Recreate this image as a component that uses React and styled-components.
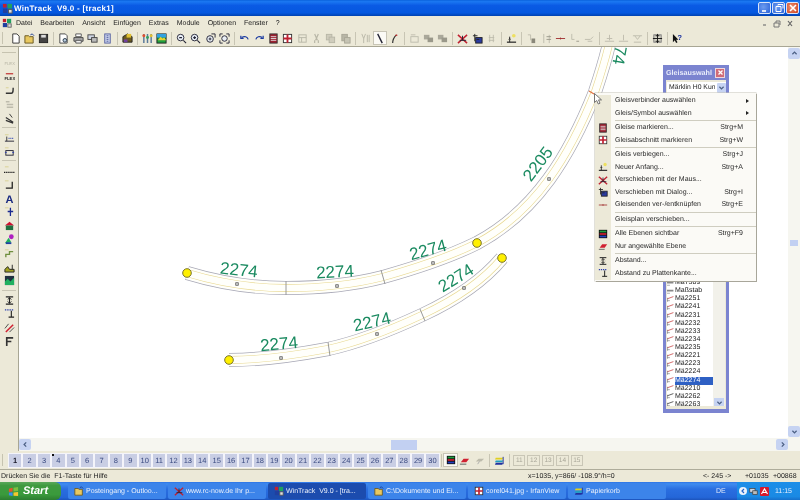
import React from "react";
import styled, { createGlobalStyle } from "styled-components";

const FONT = `"Liberation Sans", Arial, sans-serif`;
const BEIGE = "#ece9d8";

const Global = createGlobalStyle`
  html, body { margin: 0; padding: 0; background: ${BEIGE}; }
  body { font-family: ${FONT}; overflow: hidden; text-rendering: geometricPrecision; }
`;

const g = {
  new: <path d="M3 1h4.5L10 3.5V11H3z" fill="#fff" stroke="#333" />,
  open: <><path d="M1 3h4l1 1h4v7H1z" fill="#e8c860" stroke="#665520" /><path d="M7 2l2-1 2 2" fill="none" stroke="#1a3a90" /></>,
  save: <><rect x="1.5" y="1.5" width="9" height="9" fill="#444" stroke="#222" /><rect x="3.5" y="2" width="5" height="3" fill="#ddd" /></>,
  preview: <><path d="M2 1h6l2 2v8H2z" fill="#fff" stroke="#444" /><circle cx="7.5" cy="8" r="2" fill="#bcd" stroke="#234" /></>,
  print: <><path d="M3 1h6v3H3z" fill="#fff" stroke="#555" /><path d="M1 5h10v4H1z" fill="#aaa" stroke="#444" /><path d="M3 8h6v3H3z" fill="#eee" stroke="#555" /></>,
  screens: <><rect x="1" y="2" width="7" height="5" fill="#cfd6e4" stroke="#444" /><rect x="5" y="5" width="6" height="5" fill="#bbb" stroke="#444" /></>,
  book: <><rect x="3" y="1" width="6" height="10" fill="#c8d0ea" stroke="#5560a0" /><path d="M5 3h2M5 5h2M5 7h2M5 9h2" stroke="#5560a0" /></>,
  bag: <><path d="M1 4l5-3 5 3v6H1z" fill="#6a5a20" stroke="#222" /><rect x="5" y="1" width="5" height="4" fill="#e0c030" /><rect x="2" y="7" width="4" height="3" fill="#7040a0" /></>,
  tools: <><path d="M2 1v10M6 1v10M10 1v10" stroke="#5a7a9a" strokeWidth="1.6" /><circle cx="2" cy="3" r="1.6" fill="#e05030" /><circle cx="6" cy="5" r="1.6" fill="#30a060" /><circle cx="10" cy="3" r="1.6" fill="#e0c030" /></>,
  land: <><rect x="1" y="1" width="10" height="10" fill="#20a040" stroke="#222" /><rect x="1" y="1" width="10" height="4" fill="#30a0e0" /><path d="M2 8l3-4 2 2 2-1 2 3z" fill="#e8d030" /></>,
  zoomOut: <><circle cx="5" cy="5" r="3.6" fill="#e8eef6" stroke="#223" /><path d="M3.5 5h3M8 8l3 3" stroke="#223" strokeWidth="1.2" /></>,
  zoomIn: <><circle cx="5" cy="5" r="3.6" fill="#e8eef6" stroke="#223" /><path d="M3.5 5h3M5 3.5v3M8 8l3 3" stroke="#223" strokeWidth="1.2" /></>,
  zoomFit: <><circle cx="5.5" cy="6.5" r="3.6" fill="#e8eef6" stroke="#223" /><path d="M4 6.5h3M5.5 5v3" stroke="#223" /><path d="M7 1h4v4" fill="none" stroke="#223" /></>,
  zoomAll: <><circle cx="6" cy="6" r="3" fill="#e8eef6" stroke="#223" /><path d="M1 4V1h3M8 1h3v3M11 8v3H8M4 11H1V8" fill="none" stroke="#223" /></>,
  undo: <path d="M3 5c3-2 6-1 7 2M2 3v3h3" fill="none" stroke="#1a3aa0" strokeWidth="1.3" />,
  redo: <path d="M9 5C6 3 3 4 2 7M10 3v3H7" fill="none" stroke="#1a3aa0" strokeWidth="1.3" />,
  redDoc: <><rect x="2" y="1" width="8" height="10" fill="#a02030" stroke="#333" /><path d="M3 4h6M3 6h6M3 8h6" stroke="#ddd" /></>,
  redGrid: <><rect x="1.5" y="1.5" width="9" height="9" fill="#fff" stroke="#333" /><path d="M1.5 6h9M6 1.5v9" stroke="#c02030" strokeWidth="2" /></>,
  grayDoc: <><rect x="2" y="2" width="8" height="8" fill="none" stroke="#b8b6a6" /><path d="M2 5h8M5 5v5" stroke="#b8b6a6" /></>,
  cut: <path d="M4 1l3 7M8 1L5 8M4 8v3M8 8v3" fill="none" stroke="#b8b6a6" strokeWidth="1.3" />,
  copy: <><rect x="1.5" y="1.5" width="6" height="6" fill="#cfccbc" stroke="#b8b6a6" /><rect x="4.5" y="4.5" width="6" height="6" fill="#cfccbc" stroke="#b8b6a6" /></>,
  paste: <><rect x="2" y="1.5" width="6" height="7" fill="#b8b6a6" stroke="#a8a696" /><rect x="5" y="5" width="6" height="6" fill="#c6c4b4" stroke="#a8a696" /></>,
  forkGray: <path d="M2 1l2 5v5M6 1L4 6M8 2v8M10 2v8" fill="none" stroke="#b8b6a6" />,
  diag: <path d="M4 1l5 10" stroke="#223" strokeWidth="1.5" />,
  slash: <><path d="M4 11c0-4 2-7 4-9" fill="none" stroke="#333" strokeWidth="1.3" /><path d="M7 3l2-1" stroke="#c03030" strokeWidth="1.5" /></>,
  stackGray: <><rect x="1" y="2" width="6" height="5" fill="#aaa89a" /><rect x="5" y="5" width="6" height="5" fill="#9a988a" /></>,
  boxLight: <><rect x="2" y="4" width="8" height="6" fill="none" stroke="#bdbbac" /><path d="M2 2h5" stroke="#bdbbac" /></>,
  moveX: <><path d="M1 11L11 2M1 2l10 9" stroke="#c02030" strokeWidth="1.6" /><path d="M3 8h7M6 3v5" stroke="#223" /></>,
  moveBox: <><rect x="4" y="5" width="7" height="6" fill="#2a3aa0" stroke="#222" /><path d="M3 1v8M1 3h5M5 7h3" stroke="#222" /></>,
  grayTracks: <><path d="M3 5h6M3 8h6M4 2v8M8 2v8" stroke="#bdbbac" /></>,
  start: <><path d="M1 10h10" stroke="#222" strokeWidth="1.3" /><path d="M4 4v6" stroke="#222" /><path d="M3 7l1-1 1 1" stroke="#222" fill="none" /><circle cx="8.5" cy="3" r="2" fill="#eee060" /></>,
  trackA: <><path d="M2 2h3v6" fill="none" stroke="#bdbbac" /><rect x="6" y="6" width="4" height="5" fill="#8a887a" /></>,
  trackB: <><path d="M3 1v10M9 2v9" stroke="#bdbbac" /><path d="M6 4h5M6 7h5" stroke="#9a988a" /></>,
  line: <path d="M1 6h10M6 5v2" stroke="#a03030" />,
  trackC: <><path d="M3 1v6h3" fill="none" stroke="#bdbbac" /><path d="M8 9h3" stroke="#9a988a" /></>,
  trackD: <path d="M1 7h6l3-3M4 9h5" fill="none" stroke="#bdbbac" />,
  level1: <path d="M6 2v6M1 9h10M3 6h6" fill="none" stroke="#bdbbac" />,
  level2: <path d="M6 2v6M1 9h10" fill="none" stroke="#bdbbac" />,
  level3: <path d="M1 3h10M3 3l3 4 3-4M2 10h8" fill="none" stroke="#bdbbac" />,
  fit: <><rect x="2" y="2" width="8" height="8" fill="#d8d6c8" stroke="#777" /><path d="M6 1v10M1 6h10M4 3h4M4 9h4" stroke="#111" /></>,
  help: <><path d="M1 1v9l2-2 1.5 3 1.500-1-1.500-2.600H7z" fill="#111" /><text x="6" y="8" fontSize="8" fontWeight="700" fill="#1a30a0" fontFamily={FONT}>?</text></>,
  flexGray: <text x="0.500" y="9" fontSize="4.600" fill="#b8b6a6" fontFamily={FONT}>FLEX</text>,
  flex: <><path d="M2 3h8" stroke="#c03030" strokeWidth="1.3" /><text x="0.500" y="10" fontSize="4.600" fontWeight="700" fill="#222" fontFamily={FONT}>FLEX</text></>,
  hook: <><path d="M2 9h6c2 0 2-2 2-6" fill="none" stroke="#333" strokeWidth="1.5" /><path d="M2 3h3" stroke="#d8d090" /></>,
  grayLines: <path d="M2 3h4M3 6h7M3 9h7" stroke="#bdbbac" strokeWidth="1.5" />,
  diagTracks: <><path d="M2 5l8 5M2 8l8 3" stroke="#333" strokeWidth="1.3" /><path d="M6 1l3 4" stroke="#333" /></>,
  blueDash: <><path d="M1 3h4" stroke="#d8d090" /><path d="M3 5v5" stroke="#333" /><path d="M1 10h10" stroke="#223" /><path d="M5 7h6" stroke="#2a40b0" strokeDasharray="1 1" strokeWidth="1.4" /></>,
  cam: <><path d="M1 2h4" stroke="#d8d090" /><rect x="2" y="5" width="8" height="5" fill="none" stroke="#223" /><path d="M1 7h2M9 7h2" stroke="#2a40b0" /></>,
  measure: <><path d="M1 2h4" stroke="#d8d090" /><path d="M0 8h12" stroke="#222" strokeDasharray="1.5 .8" strokeWidth="1.4" /></>,
  corner: <><path d="M1 2h4" stroke="#d8d090" /><path d="M9 3v7H2" fill="none" stroke="#222" strokeWidth="1.4" /></>,
  letter: <text x="1.500" y="10.500" fontSize="12" fontWeight="700" fill="#1a2a80" fontFamily={FONT}>A</text>,
  pin: <><path d="M1 2h4" stroke="#d8d090" /><path d="M7 2v9M4 6h6" stroke="#1a2a90" strokeWidth="1.4" /></>,
  house: <><path d="M1 6l5-4 5 4z" fill="#d01030" /><rect x="2" y="6" width="8" height="5" fill="#207040" /></>,
  tree: <><circle cx="8" cy="3" r="2.6" fill="#b020c0" /><path d="M1 10l4-6 3 5z" fill="#20b060" /><rect x="2" y="9" width="6" height="2" fill="#2040a0" /></>,
  snake: <><path d="M1 2h4" stroke="#d8d090" /><path d="M2 10V7h4V4h4" fill="none" stroke="#709040" strokeWidth="1.5" /></>,
  scene: <path d="M1 11V8l3-3 2 3h5v3zM9 3v5" fill="#a0a020" stroke="#222" />,
  chart: <><rect x="1" y="1" width="10" height="10" fill="#203040" /><path d="M1 11V7l3-3 3 3 4-4v8z" fill="#20b060" /></>,
  spacing: <><path d="M2 2h8M2 10h8M6 3v6" stroke="#222" strokeWidth="1.2" /><path d="M4 5l2-2 2 2M4 7l2 2 2-2" fill="none" stroke="#222" /></>,
  edge: <><path d="M1 2h10" stroke="#2a40b0" strokeWidth="1.4" strokeDasharray="1.5 1" /><path d="M8 3v7M5 10h6" stroke="#222" strokeWidth="1.2" /></>,
  redLines: <><path d="M2 11L10 3" stroke="#d02030" strokeWidth="1.6" /><path d="M1 7l4-5M6 11l5-5" stroke="#444" /></>,
  fLetter: <path d="M3 11V2h7M3 6h5" fill="none" stroke="#333" strokeWidth="1.8" />,
  layers: <><rect x="1" y="1" width="10" height="10" fill="#111" /><rect x="2" y="2" width="8" height="2" fill="#20a040" /><rect x="2" y="5" width="8" height="2" fill="#d02030" /><rect x="2" y="8" width="8" height="2" fill="#2040c0" /></>,
  redPlane: <><path d="M2 8l3-4h6L8 8z" fill="#d02030" /><path d="M1 10h7" stroke="#555" /></>,
  grayPlane: <><path d="M2 7l3-3h6L8 7z" fill="#bdbbac" /><path d="M4 10l2-3" stroke="#aaa" /></>,
  layersFlat: <><path d="M2 3h8l-1 2H1z" fill="#e0d020" /><path d="M2 6h8l-1 2H1z" fill="#20a0c0" /><path d="M2 8.500h8l-1 2H1z" fill="#2030a0" /><path d="M10 2v8" stroke="#2030a0" /></>,
  app: <><rect x="1" y="1" width="4" height="4" fill="#c02030" /><rect x="6" y="1" width="5" height="5" fill="#20a060" /><rect x="1" y="6" width="5" height="5" fill="#2040a0" /><rect x="7" y="7" width="4" height="4" fill="#ddd" stroke="#555" /></>,
  trackSmall: <><path d="M0 5l11-4" stroke="#c03030" strokeWidth="1.2" /><path d="M0 8h5M1 3v7" stroke="#777" /></>,
  trackDark: <><path d="M0 5l11-4" stroke="#222" strokeWidth="1.2" /><path d="M0 8h5M1 3v7" stroke="#777" /></>,
  ruler: <><rect x="0" y="3" width="11" height="3" fill="#888" /><path d="M0 9h5" stroke="#777" /></>,
};

const Glyph = ({ name, size = 11 }) => (
  <svg width={size} height={size} viewBox="0 0 12 12">{g[name]}</svg>
);

const topTools = [
  "new", "open", "save", 0, "preview", "print", "screens", "book", 0, "bag", 0, "tools", "land", 0,
  "zoomOut", "zoomIn", "zoomFit", "zoomAll", 0, "undo", "redo", "redDoc", "redGrid", "grayDoc", "cut", "copy", "paste", 0,
  "forkGray", "diag", "slash", 0, "boxLight", "stackGray", "stackGray", 0, "moveX", "moveBox", "grayTracks", 0, "start", 0,
  "trackA", "trackB", "line", "trackC", "trackD", 0, "level1", "level2", "level3", 0, "fit", 0, "help",
];

const sideTools = [
  "flexGray", "flex", "hook", "grayLines", "diagTracks", 0, "blueDash", "cam", 0,
  "measure", "corner", "letter", "pin", "house", "tree", "snake", "scene", "chart", 0,
  "spacing", "edge", "redLines", "fLetter",
];

const menus = ["Datei", "Bearbeiten", "Ansicht", "Einfügen", "Extras", "Module", "Optionen", "Fenster", "?"];

const contextMenu = [
  { label: "Gleisverbinder auswählen", arrow: true },
  { label: "Gleis/Symbol auswählen", arrow: true },
  0,
  { label: "Gleise markieren...", key: "Strg+M", icon: "redDoc" },
  { label: "Gleisabschnitt markieren", key: "Strg+W", icon: "redGrid" },
  0,
  { label: "Gleis verbiegen...", key: "Strg+J" },
  { label: "Neuer Anfang...", key: "Strg+A", icon: "start" },
  { label: "Verschieben mit der Maus...", icon: "moveX" },
  { label: "Verschieben mit Dialog...", key: "Strg+I", icon: "moveBox" },
  { label: "Gleisenden ver-/entknüpfen", key: "Strg+E", icon: "line" },
  0,
  { label: "Gleisplan verschieben..." },
  0,
  { label: "Alle Ebenen sichtbar", key: "Strg+F9", icon: "layers" },
  { label: "Nur angewählte Ebene", icon: "redPlane" },
  0,
  { label: "Abstand...", icon: "spacing" },
  { label: "Abstand zu Plattenkante...", icon: "edge" },
];

const trackItems = [
  ["Ma7389", "ruler"], ["Maßstab", "ruler"], ["Mä2251"], ["Mä2241"], ["Mä2231"], ["Mä2232"], ["Mä2233"], ["Mä2234"],
  ["Mä2235"], ["Mä2221"], ["Mä2223"], ["Mä2224"], ["Mä2274", null, true], ["Mä2210"], ["Mä2262", "trackDark"], ["Mä2263", "trackDark"],
];

const tasks = [
  { label: "Posteingang - Outloo...", icon: "open" },
  { label: "www.rc-now.de Ihr p...", icon: "moveX" },
  { label: "WinTrack  V9.0 - [tra...", icon: "app", active: true },
  { label: "C:\\Dokumente und Ei...", icon: "open" },
  { label: "corel041.jpg - IrfanView", icon: "redGrid" },
  { label: "Papierkorb", icon: "layersFlat" },
];

const TRACK_A = "M187 273 C220 283 255 288 286 288 C320 288 352 285 383 277 C415 268 447 258 477 243 C505 228 530 205 549 179 C568 153 583 122 595 92 C600 77 605 62 609 44";
const TRACK_B = "M229 360 C262 360 296 355 328 349 C360 342 392 329 422 315 C450 302 482 282 502 258";

const labels = [
  { t: "2274", x: 239, y: 270, r: 6 },
  { t: "2274", x: 335, y: 272, r: -3 },
  { t: "2274", x: 428, y: 250, r: -15 },
  { t: "2205", x: 538, y: 164, r: -53 },
  { t: "2274", x: 279, y: 344, r: -5 },
  { t: "2274", x: 372, y: 322, r: -13 },
  { t: "2274", x: 456, y: 278, r: -32 },
  { t: "2274", x: 621, y: 46, r: 100 },
];

const squares = [[237, 284], [337, 286], [433, 263], [549, 179], [281, 358], [377, 334], [464, 288]];
const joints = [[286, 281, 286, 295], [381, 270, 385, 284], [328, 342, 330, 356], [420, 309, 425, 321]];
const dots = [[187, 273], [477, 243], [229, 360], [502, 258]];

const Track = ({ d }) => (
  <g fill="none">
    <path d={d} stroke="#a8a8b6" strokeWidth="14" />
    <path d={d} stroke="#fffffb" strokeWidth="12.600" />
    <path d={d} stroke="#e8d890" strokeWidth="7.800" />
    <path d={d} stroke="#fffffb" strokeWidth="6.600" />
  </g>
);

const Chevron = ({ d }) => (
  <svg width="7" height="7" viewBox="0 0 10 10"><path d={d} fill="none" stroke="#4d6185" strokeWidth="1.800" /></svg>
);

const App = () => (
  <Screen>
    <Global />
    <TitleBar>
      <Glyph name="app" size={11} />
      <TitleText>WinTrack&nbsp; V9.0 - [track1]</TitleText>
      <WinButtons>
        <WinButton><svg width="10" height="10" viewBox="0 0 10 10"><path d="M2 8h4" stroke="#fff" strokeWidth="1.6" /></svg></WinButton>
        <WinButton><svg width="10" height="10" viewBox="0 0 10 10"><path d="M4 1.500h5v4M4 1.500v1M2 3.500h5v5H2z" fill="none" stroke="#fff" /></svg></WinButton>
        <WinButton $close><svg width="10" height="10" viewBox="0 0 10 10"><path d="M2 2l6 6M8 2L2 8" stroke="#fff" strokeWidth="1.6" /></svg></WinButton>
      </WinButtons>
    </TitleBar>

    <MenuBar>
      <Glyph name="app" size={10} />
      <MenuItems>
        {menus.map((m) => <MenuItem key={m}>{m}</MenuItem>)}
      </MenuItems>
      <MdiButtons>
        <svg width="38" height="9" viewBox="0 0 38 9">
          <path d="M2 6h3" stroke="#777" strokeWidth="1.2" />
          <path d="M13 4h5v4h-5zM15 4V2h4v4" fill="none" stroke="#777" />
          <path d="M27 2l4 5M31 2l-4 5" stroke="#666" strokeWidth="1.2" />
        </svg>
      </MdiButtons>
    </MenuBar>

    <ToolBar>
      <Grip />
      <ToolStrip>
        {topTools.map((name, i) =>
          name ? <ToolButton key={i} $active={name === "diag"}><Glyph name={name} /></ToolButton> : <ToolSep key={i} />
        )}
      </ToolStrip>
    </ToolBar>

    <Main>
      <SideBar>
        <SideGrip />
        {sideTools.map((name, i) =>
          name ? <SideButton key={i}><Glyph name={name} /></SideButton> : <SideSep key={i} />
        )}
      </SideBar>

      <Canvas>
        <svg width="768" height="391" viewBox="19 47 768 391">
          <Track d={TRACK_A} />
          <Track d={TRACK_B} />
          {joints.map(([a, b, c, d], i) => <line key={i} x1={a} y1={b} x2={c} y2={d} stroke="#9a9a9a" />)}
          {squares.map(([x, y], i) => <rect key={i} x={x - 1.2} y={y - 1.2} width="2.400" height="2.400" fill="#fff" stroke="#444" strokeWidth=".8" />)}
          {labels.map((l, i) => (
            <text key={i} x={l.x} y={l.y} transform={`rotate(${l.r} ${l.x} ${l.y})`} textAnchor="middle" dominantBaseline="central"
              fontFamily={FONT} fontSize="17" fill="#1a8a60">{l.t}</text>
          ))}
          {dots.map(([x, y], i) => <circle key={i} cx={x} cy={y} r="4.300" fill="#fff000" stroke="#7a7430" />)}
          <path d="M589 91l5 3" stroke="#e07040" strokeWidth="1.2" />
        </svg>
      </Canvas>

      <VScroll>
        <ScrollButton><Chevron d="M2 6l3-3 3 3" /></ScrollButton>
        <VTrack><VThumb /></VTrack>
        <ScrollButton><Chevron d="M2 4l3 3 3-3" /></ScrollButton>
      </VScroll>

      <HScroll>
        <ScrollButton><Chevron d="M6 2L3 5l3 3" /></ScrollButton>
        <HTrack><HThumb /></HTrack>
        <ScrollButton><Chevron d="M4 2l3 3-3 3" /></ScrollButton>
      </HScroll>
      <Corner />

      <Palette>
        <PaletteTitle>
          <PaletteName>Gleisauswahl</PaletteName>
          <PaletteClose>
            <svg width="7" height="7" viewBox="0 0 7 7"><path d="M1.500 1.500l4 4M5.500 1.500l-4 4" stroke="#fff" strokeWidth="1.300" /></svg>
          </PaletteClose>
        </PaletteTitle>
        <PaletteBody>
          <Combo>
            <ComboText>Märklin H0 Kun</ComboText>
            <ComboArrow><Chevron d="M2 4l3 3 3-3" /></ComboArrow>
          </Combo>
          <ListRow>
            <TrackList>
              <TrackItems>
                {trackItems.map(([name, icon, selected]) => (
                  <TrackItem key={name}>
                    <Glyph name={icon || "trackSmall"} size={7} />
                    <TrackName $selected={selected}>{name}</TrackName>
                  </TrackItem>
                ))}
              </TrackItems>
            </TrackList>
            <ListScroll><ListDown><Chevron d="M2 4l3 3 3-3" /></ListDown></ListScroll>
          </ListRow>
        </PaletteBody>
      </Palette>

      <ContextMenu>
        {contextMenu.map((item, i) =>
          item ? (
            <CtxRow key={i}>
              <CtxIcon>{item.icon && <Glyph name={item.icon} size={10} />}</CtxIcon>
              <CtxLabel>{item.label}</CtxLabel>
              {item.key && <CtxKey>{item.key}</CtxKey>}
              {item.arrow && <CtxArrow />}
            </CtxRow>
          ) : (
            <CtxSep key={i}><CtxIcon /><CtxLine /></CtxSep>
          )
        )}
      </ContextMenu>

      <Cursor width="9" height="12" viewBox="0 0 9 12">
        <path d="M.5.500v9l2.200-2 1.600 3.500 1.700-.8-1.500-3.300h3z" fill="#fff" stroke="#555" strokeWidth=".8" />
      </Cursor>
    </Main>

    <LayerBar>
      <Grip />
      <LayerStrip>
        {Array.from({ length: 30 }, (_, i) => (
          <LayerButton key={i} $mark={i === 3} $dark={i === 0}>{i + 1}</LayerButton>
        ))}
        <ToolSep $w={3.6} />
        <LayerActive><Glyph name="layers" size={10} /></LayerActive>
        <ToolButton><Glyph name="redPlane" /></ToolButton>
        <ToolButton><Glyph name="grayPlane" /></ToolButton>
        <ToolSep />
        <ToolButton><Glyph name="layersFlat" /></ToolButton>
        <ToolSep />
        {[11, 12, 13, 14, 15].map((n) => <GroupButton key={n}>{n}</GroupButton>)}
      </LayerStrip>
    </LayerBar>

    <StatusBar>
      <StatusHint>Drücken Sie die&nbsp; F1-Taste für Hilfe</StatusHint>
      <StatusCoords>x=1035, y=866/ -108.9°/h=0</StatusCoords>
      <StatusAngle>&lt;- 245 -&gt;</StatusAngle>
      <StatusValue>+01035</StatusValue>
      <StatusValue>+00868</StatusValue>
    </StatusBar>

    <Taskbar>
      <StartButton>
        <svg width="11" height="11" viewBox="0 0 12 12">
          <path d="M1 3l4-1v4l-4 .6z" fill="#e8542c" />
          <path d="M6 2l5-1v4.500L6 6z" fill="#7cc040" />
          <path d="M1 7.200L5 7v4l-4-.8z" fill="#3c8cf0" />
          <path d="M6 7l5-.5V11l-5-.500z" fill="#f4c830" />
        </svg>
        <StartText>Start</StartText>
      </StartButton>
      <TaskList>
        {tasks.map((t) => (
          <Task key={t.label} $active={t.active}>
            <Glyph name={t.icon} size={10} />
            <TaskLabel>{t.label}</TaskLabel>
          </Task>
        ))}
      </TaskList>
      <Language>DE</Language>
      <Tray>
        <TrayBack>
          <svg width="6" height="6" viewBox="0 0 6 6"><path d="M4 1L2 3l2 2" fill="none" stroke="#1f62c8" strokeWidth="1.200" /></svg>
        </TrayBack>
        <Glyph name="screens" size={9} />
        <TrayAlert>
          <svg width="9" height="9" viewBox="0 0 9 9"><path d="M1.500 7L4.500 2 7.500 7M3 5.500h3" fill="none" stroke="#fff" strokeWidth="1.200" /></svg>
        </TrayAlert>
        <Clock>11:15</Clock>
      </Tray>
    </Taskbar>
  </Screen>
);

export default App;

const Screen = styled.div`
  width: 800px;
  height: 500px;
  display: flex;
  flex-direction: column;
  background: ${BEIGE};
  overflow: hidden;
  filter: blur(0.25px);
`;

const TitleBar = styled.div`
  height: 16px;
  flex: none;
  display: flex;
  align-items: center;
  padding-left: 2px;
  gap: 1px;
  background: linear-gradient(180deg, #0a62dc 0, #1b78f2 10%, #0a5ae4 35%, #0558e0 80%, #0042b0 100%);
`;
const TitleText = styled.span`
  color: #fff;
  font-size: 8px;
  font-weight: 700;
  letter-spacing: 0.3px;
  white-space: pre;
`;
const WinButtons = styled.div`
  margin-left: auto;
  display: flex;
  gap: 1px;
  padding-right: 1px;
`;
const WinButton = styled.div`
  width: 13px;
  height: 12px;
  display: flex;
  align-items: center;
  justify-content: center;
  border: 1px solid #d8e4f8;
  border-radius: 2px;
  box-sizing: border-box;
  background: ${(p) => (p.$close ? "radial-gradient(circle at 40% 40%, #e89070, #d0401c)" : "radial-gradient(circle at 40% 40%, #6c9cf0, #2a62d8)")};
`;

const MenuBar = styled.div`
  height: 14px;
  flex: none;
  display: flex;
  align-items: center;
  padding-left: 2px;
  background: ${BEIGE};
`;
const MenuItems = styled.div`
  display: flex;
  gap: 8px;
  margin-left: 4px;
`;
const MenuItem = styled.span`
  font-size: 7px;
  color: #222;
`;
const MdiButtons = styled.div`
  margin-left: auto;
  margin-right: 1px;
  display: flex;
  align-items: center;
`;

const ToolBar = styled.div`
  height: 17px;
  flex: none;
  display: flex;
  align-items: center;
  background: ${BEIGE};
  border-bottom: 1px solid #a8a694;
  box-sizing: border-box;
`;
const Grip = styled.div`
  width: 1px;
  height: 12px;
  margin: 0 5px 0 2px;
  background: #c6c3b0;
`;
const ToolStrip = styled.div`
  display: flex;
  align-items: center;
`;
const ToolButton = styled.div`
  width: 14.4px;
  height: 14px;
  flex: none;
  display: flex;
  align-items: center;
  justify-content: center;
  background: ${(p) => (p.$active ? "#fbfaf5" : "transparent")};
  box-shadow: ${(p) => (p.$active ? "inset 0 0 0 1px #c8c5b6" : "none")};
`;
const ToolSep = styled.div`
  width: ${(p) => p.$w || 5.6}px;
  height: 13px;
  flex: none;
  background: linear-gradient(#c8c5b4, #c8c5b4) center / 1px 100% no-repeat;
`;

const Main = styled.div`
  position: relative;
  flex: 1;
  min-height: 0;
  display: grid;
  grid-template-columns: 19px 1fr 12px;
  grid-template-rows: 1fr 13px;
`;

const SideBar = styled.div`
  grid-row: 1 / 3;
  display: flex;
  flex-direction: column;
  align-items: stretch;
  background: ${BEIGE};
  border-right: 1px solid #a8a694;
  box-sizing: border-box;
`;
const SideGrip = styled.div`
  height: 1px;
  margin: 5px 2px 3px;
  background: #c6c3b0;
`;
const SideButton = styled.div`
  height: 13.8px;
  flex: none;
  display: flex;
  align-items: center;
  justify-content: center;
`;
const SideSep = styled.div`
  height: 5.5px;
  flex: none;
  background: linear-gradient(#c8c5b4, #c8c5b4) center / 14px 1px no-repeat;
`;

const Canvas = styled.div`
  background: #fff;
  overflow: hidden;
  min-width: 0;
  svg { display: block; }
`;

const VScroll = styled.div`
  display: flex;
  flex-direction: column;
  background: #f6f6f0;
`;
const HScroll = styled.div`
  display: flex;
  background: #f6f6f0;
`;
const Corner = styled.div`
  background: #f6f6f0;
`;
const ScrollButton = styled.div`
  width: 12px;
  height: 11px;
  flex: none;
  margin: 1px 0;
  display: flex;
  align-items: center;
  justify-content: center;
  background: #c6d3f2;
  border-radius: 2px;
`;
const VTrack = styled.div`
  flex: 1;
  display: flex;
  flex-direction: column;
  justify-content: center;
`;
const VThumb = styled.div`
  height: 6px;
  margin: 0 2px 0;
  background: #c2d0f2;
`;
const HTrack = styled.div`
  flex: 1;
  display: flex;
  align-items: center;
  justify-content: center;
`;
const HThumb = styled.div`
  width: 26px;
  height: 10px;
  background: #c2d0f2;
`;

const Palette = styled.div`
  position: absolute;
  left: 663px;
  top: 18px;
  width: 66px;
  height: 348px;
  display: flex;
  flex-direction: column;
  box-sizing: border-box;
  background: #7b84d0;
  padding: 0 3px 4px;
`;
const PaletteTitle = styled.div`
  height: 15px;
  flex: none;
  display: flex;
  align-items: center;
  justify-content: space-between;
  padding-right: 1px;
`;
const PaletteName = styled.span`
  color: #e8ecfa;
  font-size: 7.2px;
  font-weight: 700;
`;
const PaletteClose = styled.div`
  width: 8px;
  height: 8px;
  display: flex;
  align-items: center;
  justify-content: center;
  background: #d06c78;
  border: 1px solid #f0d8dc;
`;
const PaletteBody = styled.div`
  flex: 1;
  min-height: 0;
  display: flex;
  flex-direction: column;
  gap: 3px;
  padding: 2px 0 3px 1px;
  background: ${BEIGE};
`;
const Combo = styled.div`
  height: 11px;
  flex: none;
  display: flex;
  align-items: center;
  justify-content: space-between;
  background: #fff;
`;
const ComboText = styled.span`
  font-size: 6.8px;
  color: #222;
  padding-left: 2px;
  white-space: nowrap;
  overflow: hidden;
`;
const ComboArrow = styled.div`
  width: 9px;
  height: 10px;
  flex: none;
  display: flex;
  align-items: center;
  justify-content: center;
  background: #c6d3f2;
  border-radius: 1px;
`;
const ListRow = styled.div`
  flex: 1;
  min-height: 0;
  display: flex;
  margin-right: 1px;
`;
const TrackList = styled.div`
  width: 46px;
  flex: none;
  display: flex;
  flex-direction: column;
  justify-content: flex-end;
  overflow: hidden;
  background: #fff;
`;
const TrackItems = styled.div`
  margin-bottom: -3px;
  flex: none;
`;
const TrackItem = styled.div`
  height: 8.13px;
  display: flex;
  align-items: center;
  gap: 1px;
`;
const TrackName = styled.span`
  flex: 1;
  font-size: 7px;
  line-height: 8px;
  color: ${(p) => (p.$selected ? "#fff" : "#222")};
  background: ${(p) => (p.$selected ? "#2e60c4" : "transparent")};
`;
const ListScroll = styled.div`
  flex: 1;
  display: flex;
  flex-direction: column;
  justify-content: flex-end;
  background: #f2f1ea;
`;
const ListDown = styled.div`
  height: 8px;
  margin: 0 1px 0;
  display: flex;
  align-items: center;
  justify-content: center;
  background: #c6d3f2;
`;

const ContextMenu = styled.div`
  position: absolute;
  left: 595px;
  top: 46px;
  width: 161px;
  padding: 1.500px 0;
  box-sizing: border-box;
  background: #fbfaf6;
  box-shadow: 1px 1px 0 #a8a69a, 0 0 0 0.5px #c4c2b6;
`;
const CtxRow = styled.div`
  height: 12.500px;
  display: flex;
  align-items: center;
  padding-right: 7px;
`;
const CtxIcon = styled.div`
  width: 16px;
  height: 100%;
  flex: none;
  display: flex;
  align-items: center;
  justify-content: center;
  margin-right: 4px;
  background: ${BEIGE};
`;
const CtxLabel = styled.span`
  font-size: 7px;
  color: #2a2a2a;
  white-space: nowrap;
`;
const CtxKey = styled.span`
  margin-left: auto;
  margin-right: 6px;
  font-size: 7px;
  color: #2a2a2a;
`;
const CtxArrow = styled.span`
  margin-left: auto;
  width: 0;
  height: 0;
  border-left: 3px solid #222;
  border-top: 2.500px solid transparent;
  border-bottom: 2.500px solid transparent;
`;
const CtxSep = styled.div`
  height: 2px;
  display: flex;
  align-items: center;
`;
const CtxLine = styled.div`
  flex: 1;
  height: 1px;
  background: #cfcdc0;
`;
const Cursor = styled.svg`
  position: absolute;
  left: 594px;
  top: 46px;
`;

const LayerBar = styled.div`
  height: 19px;
  flex: none;
  display: flex;
  align-items: center;
  background: ${BEIGE};
  border-bottom: 1px solid #aeac9a;
  box-sizing: border-box;
`;
const LayerStrip = styled.div`
  display: flex;
  align-items: center;
`;
const LayerButton = styled.div`
  position: relative;
  width: 12.400px;
  height: 13px;
  margin: 0 1px;
  flex: none;
  display: flex;
  align-items: center;
  justify-content: center;
  font-size: 7.5px;
  font-weight: ${(p) => (p.$dark ? 700 : 400)};
  color: ${(p) => (p.$dark ? "#1a1a2a" : "#3a4a80")};
  background: #c9cee4;
  box-shadow: 0 0 0 1px #f4f4fa;
  &::before {
    content: "";
    display: ${(p) => (p.$mark ? "block" : "none")};
    position: absolute;
    left: 0;
    top: 0;
    width: 2px;
    height: 2px;
    background: #111;
  }
`;
const LayerActive = styled(ToolButton)`
  background: #fbfaf5;
  box-shadow: inset 0 0 0 1px #c8c5b6;
`;
const GroupButton = styled.div`
  width: 12.400px;
  height: 11px;
  margin: 0 1px;
  flex: none;
  display: flex;
  align-items: center;
  justify-content: center;
  font-size: 6.500px;
  color: #a8a698;
  box-shadow: inset 0 0 0 1px #c9c6b6;
`;

const StatusBar = styled.div`
  height: 12px;
  flex: none;
  display: flex;
  align-items: center;
  padding: 0 3px 0 1px;
  font-size: 7px;
  color: #222;
  background: ${BEIGE};
`;
const StatusHint = styled.span`
  width: 527px;
  flex: none;
  white-space: pre;
`;
const StatusCoords = styled.span`
  width: 175px;
  flex: none;
`;
const StatusAngle = styled.span`
  width: 42px;
  flex: none;
`;
const StatusValue = styled.span`
  width: 28px;
  flex: none;
`;

const Taskbar = styled.div`
  height: 18px;
  flex: none;
  display: flex;
  align-items: center;
  background: linear-gradient(180deg, #2c72e4 0, #3f8cf0 10%, #2a6ee0 40%, #2466d8 85%, #1c54bc 100%);
`;
const StartButton = styled.div`
  width: 61px;
  height: 100%;
  flex: none;
  box-sizing: border-box;
  display: flex;
  align-items: center;
  gap: 4px;
  padding-left: 8px;
  border-radius: 0 6px 6px 0;
  background: linear-gradient(180deg, #5aa85a 0, #3f9a3f 20%, #3a9a3c 70%, #2c7c30 100%);
`;
const StartText = styled.span`
  color: #fff;
  font-size: 11px;
  font-weight: 700;
  font-style: italic;
`;
const TaskList = styled.div`
  display: flex;
  gap: 2px;
  margin-left: 7px;
`;
const Task = styled.div`
  width: 98px;
  height: 16px;
  flex: none;
  display: flex;
  align-items: center;
  gap: 2px;
  padding-left: 6px;
  box-sizing: border-box;
  border-radius: 2px;
  background: ${(p) => (p.$active ? "#1c4cae" : "#3c84ea")};
`;
const TaskLabel = styled.span`
  color: #eaf0fb;
  font-size: 7px;
  white-space: pre;
`;
const Language = styled.span`
  margin-left: 50px;
  color: #dfe8fb;
  font-size: 7px;
`;
const Tray = styled.div`
  margin-left: auto;
  width: 63px;
  height: 100%;
  flex: none;
  box-sizing: border-box;
  display: flex;
  align-items: center;
  gap: 2px;
  padding-left: 2px;
  background: linear-gradient(180deg, #1c8ee8, #1a8ae4 80%, #1670cc);
`;
const TrayBack = styled.div`
  width: 8px;
  height: 8px;
  border-radius: 50%;
  display: flex;
  align-items: center;
  justify-content: center;
  background: #eaf2fc;
`;
const TrayAlert = styled.div`
  width: 9px;
  height: 9px;
  display: flex;
  background: #d8182c;
  border-radius: 1px;
`;
const Clock = styled.span`
  margin-left: 4px;
  color: #e6effc;
  font-size: 7px;
`;
